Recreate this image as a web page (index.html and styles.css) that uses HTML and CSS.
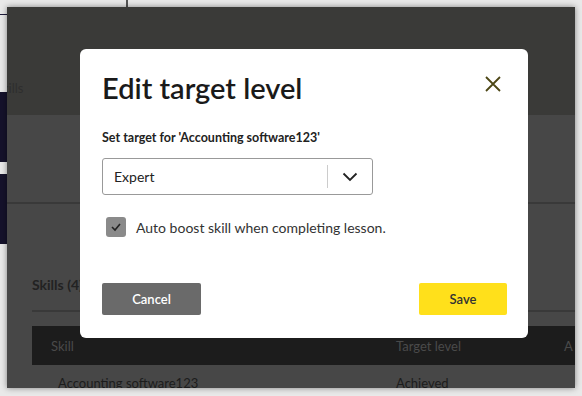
FILE: index.html
```html
<!DOCTYPE html>
<html lang="en">
<head>
  <meta charset="UTF-8" />
  <title>Edit target level</title>
  <link rel="stylesheet" href="styles.css">
</head>
<body>
  <div class="edge">
    <div class="edge-line"></div>
    <div class="edge-block"></div>
    <div class="edge-block second"></div>
  </div>
  <div class="top-tick"></div>
  <div class="window">
    <div class="page">
      <div class="top-band">
        <span class="tab">Skills</span>
      </div>
      <div class="content">
        <div class="divider"></div>
        <h2 class="section-title">Skills (4)</h2>
        <div class="table">
          <div class="thead">
            <span class="col-skill">Skill</span>
            <span class="col-target">Target level</span>
            <span class="col-more">A</span>
          </div>
          <div class="trow">
            <span class="col-skill">Accounting software123</span>
            <span class="col-target">Achieved</span>
          </div>
        </div>
      </div>
    </div>

    <div class="modal">
      <div class="modal-head">
        <h1>Edit target level</h1>
        <button class="close" aria-label="Close">
          <svg width="16" height="16" viewBox="0 0 16 16"><path d="M1 1 L15 15 M15 1 L1 15" stroke="#4d4716" stroke-width="1.8" fill="none"/></svg>
        </button>
      </div>
      <label class="field-label">Set target for 'Accounting software123'</label>
      <div class="select">
        <span class="select-value">Expert</span>
        <span class="select-sep"></span>
        <svg class="chevron" width="16" height="10" viewBox="0 0 16 10"><path d="M1.5 1.5 L8 8 L14.5 1.5" stroke="#222" stroke-width="1.8" fill="none"/></svg>
      </div>
      <div class="check-row">
        <span class="checkbox">
          <svg width="12" height="10" viewBox="0 0 12 10"><path d="M2 5 L5 8 L10 2" stroke="#222" stroke-width="1.6" fill="none"/></svg>
        </span>
        <span>Auto boost skill when completing lesson.</span>
      </div>
      <div class="actions">
        <button class="btn cancel">Cancel</button>
        <button class="btn save">Save</button>
      </div>
    </div>
  </div>
</body>
</html>
```

FILE: styles.css
```css
body {
  margin: 0;
  background: #e9e9e9;
  font-family: 'Lato', 'Liberation Sans', sans-serif;
  width: 582px;
  height: 396px;
  overflow: hidden;
  position: relative;
}
.edge {
  position: absolute;
  left: 0;
  top: 0;
  width: 7px;
  height: 396px;
}
.edge-line {
  margin-top: 14px;
  height: 1px;
  background: #1d1a3a;
}
.edge-block {
  margin-top: 77px;
  height: 70px;
  background: #15122b;
}
.edge-block.second {
  margin-top: 12px;
}
.top-tick {
  position: absolute;
  left: 126px;
  top: 0;
  width: 2px;
  height: 7px;
  background: #555;
}
.window {
  position: absolute;
  left: 7px;
  top: 7px;
  width: 568px;
  height: 381px;
  box-shadow: 0 0 6px rgba(0, 0, 0, 0.45);
  overflow: hidden;
}
.page {
  height: 100%;
  display: flex;
  flex-direction: column;
  background: #474747;
}
.top-band {
  height: 108px;
  flex-shrink: 0;
  background: #3a3a38;
  display: flex;
  align-items: flex-end;
  padding-bottom: 19px;
  box-sizing: border-box;
}
.tab {
  margin-left: -12px;
  font-size: 13px;
  color: #2e2e2e;
}
.content {
  flex: 1;
}
.divider {
  margin-top: 87px;
  height: 2px;
  background: #393939;
}
.section-title {
  margin: 0;
  margin-top: 72px;
  margin-left: 25px;
  font-size: 14px;
  font-weight: 700;
  line-height: 17px;
  color: #222;
  padding-bottom: 17px;
  border-bottom: 2px solid #393939;
}
.table {
  margin-top: 14px;
  margin-left: 25px;
}
.thead, .trow {
  display: flex;
  font-size: 13px;
}
.thead {
  height: 39px;
  align-items: center;
  background: #1c1c1c;
  color: #4a4a4a;
}
.trow {
  padding-top: 10px;
  color: #1c1c1c;
}
.col-skill {
  width: 345px;
  padding-left: 19px;
}
.trow .col-skill {
  padding-left: 26px;
  width: 338px;
}
.col-target {
  width: 168px;
}
.col-more {
  flex: 1;
}
.modal {
  position: absolute;
  left: 73px;
  top: 42px;
  width: 448px;
  height: 289px;
  background: #fff;
  border-radius: 6px;
  padding: 21px 21px 0 22px;
  box-sizing: border-box;
}
.modal-head {
  display: flex;
  justify-content: space-between;
  align-items: center;
}
.modal h1 {
  margin: 0;
  font-size: 29px;
  font-weight: 600;
  color: #1a1a1a;
  line-height: 36px;
}
.close {
  background: none;
  border: none;
  padding: 0;
  margin-right: 6px;
  margin-top: -8px;
  display: flex;
}
.field-label {
  display: block;
  margin-top: 24px;
  font-size: 12.5px;
  font-weight: 700;
  color: #222;
}
.select {
  margin-top: 13px;
  width: 271px;
  height: 37px;
  border: 1px solid #999;
  border-radius: 3px;
  box-sizing: border-box;
  display: flex;
  align-items: center;
  padding-left: 11px;
}
.select-value {
  flex: 1;
  font-size: 14px;
  color: #222;
}
.select-sep {
  width: 1px;
  height: 23px;
  background: #ccc;
}
.chevron {
  margin: 0 14px;
}
.check-row {
  margin-top: 22px;
  margin-left: 4px;
  display: flex;
  align-items: center;
  gap: 10px;
  font-size: 14px;
  color: #333;
}
.checkbox {
  width: 20px;
  height: 20px;
  border-radius: 3px;
  background: #8a8a8a;
  display: flex;
  align-items: center;
  justify-content: center;
}
.actions {
  margin-top: 46px;
  display: flex;
  justify-content: space-between;
}
.btn {
  height: 32px;
  border: none;
  border-radius: 2px;
  font-family: 'Lato', 'Liberation Sans', sans-serif;
  font-size: 13px;
  font-weight: 600;
  cursor: pointer;
}
.cancel {
  width: 99px;
  background: #6a6a6a;
  color: #fff;
}
.save {
  width: 88px;
  background: #ffe01b;
  color: #333;
}
```
